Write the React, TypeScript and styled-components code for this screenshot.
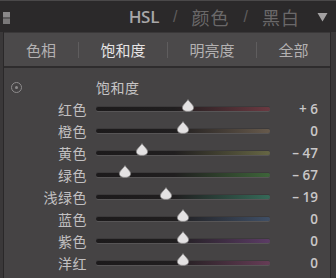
import React from "react";
import styled, { createGlobalStyle } from "styled-components";

const Global = createGlobalStyle`
  html, body { margin: 0; padding: 0; background: #3a3839; }
  body { width: 336px; height: 278px; overflow: hidden; }
`;

const FONT = `"Noto Sans CJK SC", "Noto Sans", sans-serif`;

const Frame = styled.div`
  width: 336px;
  height: 278px;
  display: flex;
  flex-direction: column;
  background: #3a3839;
  font-family: ${FONT};
`;

const Header = styled.div`
  height: 32px;
  flex: none;
  display: flex;
  align-items: center;
  justify-content: space-between;
  background: #2b292a;
  border-top: 1px solid #4a4849;
  box-sizing: border-box;
  padding: 0 8px 0 3px;
`;

const HeaderIcon = styled.div`
  width: 7px;
  height: 12px;
  background: linear-gradient(#8a8889 0 45%, #5a5859 45% 55%, #7a7879 55%);
  margin-top: 2px;
`;

const Modes = styled.div`
  display: flex;
  align-items: center;
  gap: 14px;
  font-size: 18px;
  color: #6e6c6d;
`;

const Mode = styled.span<{ $active?: boolean }>`
  color: ${(p) => (p.$active ? "#a9a7a8" : "#6a6869")};
  font-family: ${(p) => (p.$active ? `"Open Sans", ${FONT}` : FONT)};
  font-weight: ${(p) => (p.$active ? 600 : 400)};
  font-size: ${(p) => (p.$active ? "17px" : "18px")};
  letter-spacing: ${(p) => (p.$active ? "-0.3px" : "1px")};
`;

const Slash = styled.span`
  color: #5e5c5d;
  font-family: "Liberation Sans", sans-serif;
  font-size: 16px;
`;

const Caret = styled.svg`
  width: 11px;
  height: 10px;
  margin-left: 3px;
`;

const Body = styled.div`
  flex: 1;
  display: flex;
  flex-direction: column;
  margin-left: 3px;
  margin-right: 5px;
  border-left: 1px solid #2a2829;
  border-right: 1px solid #2a2829;
`;

const Tabs = styled.div`
  height: 33px;
  flex: none;
  display: grid;
  grid-template-columns: 74px 89px 89px 1fr;
  align-items: center;
  background: #4b494a;
  border-bottom: 2px solid #2e2c2d;
  border-top: 1px solid #3a3839;
`;

const Tab = styled.div<{ $active?: boolean; $sep?: boolean }>`
  text-align: center;
  font-size: 15px;
  color: ${(p) => (p.$active ? "#e6e4e5" : "#b3b1b2")};
  border-left: ${(p) => (p.$sep ? "1px solid #5f5d5e" : "none")};
  line-height: 16px;
`;

const Panel = styled.div`
  flex: 1;
  background: #454344;
  padding-top: 8px;
  display: flex;
  flex-direction: column;
`;

const TitleRow = styled.div`
  display: grid;
  grid-template-columns: 92px 1fr;
  align-items: center;
  height: 22px;
`;

const Target = styled.div`
  margin-left: 7px;
  width: 9px;
  height: 9px;
  border-radius: 50%;
  border: 1px solid #8e8c8d;
  display: flex;
  align-items: center;
  justify-content: center;
  &::after {
    content: "";
    width: 3px;
    height: 3px;
    border-radius: 50%;
    background: #8e8c8d;
  }
`;

const Title = styled.div`
  font-size: 14px;
  color: #c6c4c5;
  letter-spacing: 0.5px;
`;

const Row = styled.div`
  display: grid;
  grid-template-columns: 83px 174px 1fr;
  column-gap: 9px;
  align-items: center;
  height: 22px;
`;

const Label = styled.div`
  text-align: right;
  font-size: 14px;
  color: #c2c0c1;
  letter-spacing: 0.5px;
`;

const Track = styled.div<{ $tint: string }>`
  position: relative;
  height: 4px;
  border-radius: 2px;
  background: linear-gradient(90deg, #1c1a1b 0%, #201e1f 45%, ${(p) => p.$tint} 100%);
  box-shadow: 0 1px 0 #575556, 0 -1px 0 #3c3a3b;
`;

const Thumb = styled.svg`
  position: absolute;
  top: -8px;
  width: 14px;
  height: 13px;
  transform: translateX(-50%);
`;

const Value = styled.div`
  text-align: right;
  padding-right: 12px;
  font-family: "Open Sans", "Liberation Sans", sans-serif;
  font-weight: 600;
  font-size: 13.5px;
  color: #c9c7c8;
  white-space: pre;
`;

const rows = [
  { name: "红色", value: 6, text: "+ 6", tint: "#6b3941" },
  { name: "橙色", value: 0, text: "0", tint: "#675a4c" },
  { name: "黄色", value: -47, text: "– 47", tint: "#666644" },
  { name: "绿色", value: -67, text: "– 67", tint: "#3d6439" },
  { name: "浅绿色", value: -19, text: "– 19", tint: "#356a58" },
  { name: "蓝色", value: 0, text: "0", tint: "#3f4f66" },
  { name: "紫色", value: 0, text: "0", tint: "#5c3c66" },
  { name: "洋红", value: 0, text: "0", tint: "#663c56" },
];

function ThumbIcon({ pos }: { pos: number }) {
  return (
    <Thumb viewBox="0 0 14 13" style={{ left: `${pos}%` }}>
      <path
        d="M7 0.6 C8.2 2.8 12.2 5.6 12.6 8.2 C13 11 10.4 12.4 7 12.4 C3.6 12.4 1 11 1.4 8.2 C1.8 5.6 5.8 2.8 7 0.6 Z"
        fill="#e4e2e3"
        stroke="#7e7c7d"
        strokeWidth="0.7"
      />
    </Thumb>
  );
}

export default function App() {
  return (
    <Frame>
      <Global />
      <Header>
        <HeaderIcon />
        <Modes>
          <Mode $active>HSL</Mode>
          <Slash>/</Slash>
          <Mode>颜色</Mode>
          <Slash>/</Slash>
          <Mode>黑白</Mode>
          <Caret viewBox="0 0 11 10">
            <path d="M0.5 1 L10.5 1 L5.5 9.5 Z" fill="#a3a1a2" />
          </Caret>
        </Modes>
      </Header>
      <Body>
        <Tabs>
          <Tab>色相</Tab>
          <Tab $active $sep>饱和度</Tab>
          <Tab $sep>明亮度</Tab>
          <Tab $sep>全部</Tab>
        </Tabs>
        <Panel>
          <TitleRow>
            <Target />
            <Title>饱和度</Title>
          </TitleRow>
          {rows.map((r) => (
            <Row key={r.name}>
              <Label>{r.name}</Label>
              <Track $tint={r.tint}>
                <ThumbIcon pos={50 + r.value / 2} />
              </Track>
              <Value>{r.text}</Value>
            </Row>
          ))}
        </Panel>
      </Body>
    </Frame>
  );
}
